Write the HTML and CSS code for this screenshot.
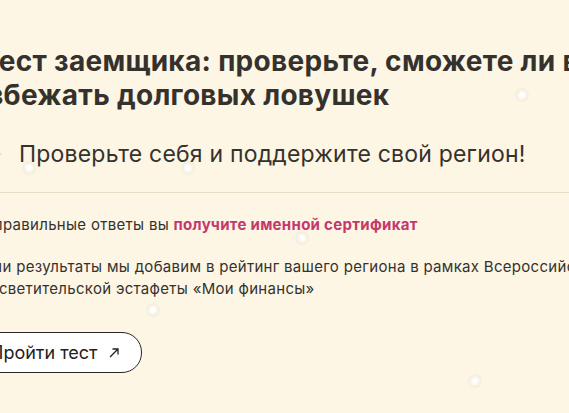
FILE: index.html
```html
<!DOCTYPE html>
<html lang="ru">
<head>
<meta charset="utf-8">
<link rel="stylesheet" href="styles.css">
</head>
<body>
<div class="page">
  <section class="promo">
    <h1 class="title">Тест заемщика: проверьте, сможете ли вы избежать долговых ловушек</h1>
    <div class="lead">
      <svg class="lead-icon" width="20" height="20" viewBox="0 0 20 20"><path d="M10 1 L12 8 L19 10 L12 12 L10 19 L8 12 L1 10 L8 8 Z" fill="#8fc3d6"/></svg>
      <span>Проверьте себя и поддержите свой регион!</span>
    </div>
    <hr class="divider">
    <p class="text">За правильные ответы вы <b class="accent">получите именной сертификат</b></p>
    <p class="text">Ваши результаты мы добавим в рейтинг вашего региона в рамках Всероссийской просветительской эстафеты «Мои финансы»</p>
    <a class="btn" href="#">Пройти тест
      <svg width="12" height="12" viewBox="0 0 12 12"><path d="M2 10 L10 2 M4.5 2 H10 V7.5" fill="none" stroke="#222" stroke-width="1.3"/></svg>
    </a>
  </section>
  <span class="glow g1"></span>
  <span class="glow g2"></span>
  <span class="glow g3"></span>
  <span class="glow g4"></span>
  <span class="glow g5"></span>
  <span class="glow g6"></span>
</div>
</body>
</html>
```
FILE: styles.css
```css
html, body {
  margin: 0;
  padding: 0;
  background: #fdf6e5;
}
.page {
  position: relative;
  width: 569px;
  height: 413px;
  overflow: hidden;
  font-family: Inter, "Noto Sans", sans-serif;
  color: #35322e;
}
.promo {
  margin-left: -29px;
  width: 720px;
  padding-top: 44px;
}
.title {
  margin: 0;
  font-size: 28px;
  line-height: 34px;
  font-weight: 700;
  text-indent: 11px;
  width: 660px;
  letter-spacing: 0.3px;
}
.lead {
  display: flex;
  align-items: center;
  gap: 16px;
  margin-top: 28px;
  margin-left: 12px;
  font-size: 23px;
  line-height: 28px;
  letter-spacing: 0.2px;
}
.lead-icon { flex: none; }
.divider {
  border: 0;
  border-top: 1px solid #e7dcc4;
  margin: 24px 0 0 0;
  width: 700px;
}
.text {
  margin: 21px 0 0 0;
  font-size: 15px;
  line-height: 22px;
  letter-spacing: 0.3px;
  width: 660px;
}
.text + .text { margin-top: 20px; }
.accent {
  color: #c4386c;
  font-weight: 700;
}
.btn {
  display: inline-flex;
  align-items: center;
  gap: 11px;
  margin-top: 32px;
  height: 41px;
  box-sizing: border-box;
  padding: 0 21px 0 18px;
  border: 1px solid #2a2724;
  border-radius: 20px;
  background: #fff;
  color: #222;
  font-size: 18px;
  text-decoration: none;
}
.glow {
  position: absolute;
  width: 16px;
  height: 16px;
  border-radius: 50%;
  background: radial-gradient(circle, #fff 0, rgba(255,255,255,0.85) 20%, rgba(225,220,205,0.3) 50%, rgba(255,255,255,0) 72%);
}
.g1 { left: 514px; top: 87px; }
.g2 { left: 467px; top: 373px; }
.g3 { left: 145px; top: 302px; }
.g4 { left: 294px; top: 230px; }
.g5 { left: 180px; top: 160px; }
.g6 { left: 21px; top: 160px; }
```
